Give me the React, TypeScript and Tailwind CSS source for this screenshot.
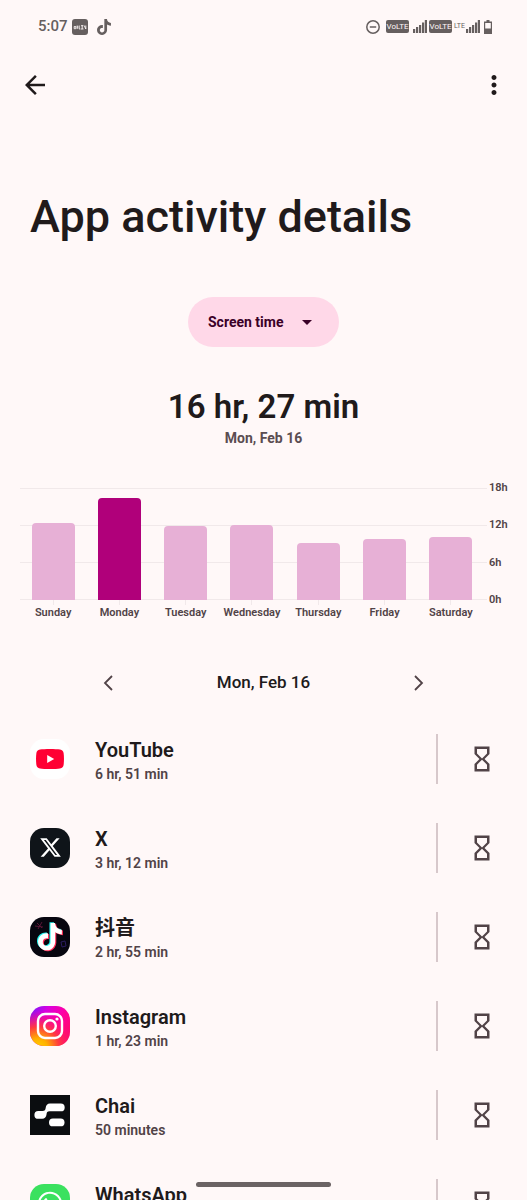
import { useState, type ReactNode } from "react";
import { MdArrowBack, MdArrowDropDown, MdHourglassEmpty, MdMoreVert } from "react-icons/md";
import { FaWhatsapp, FaXTwitter } from "react-icons/fa6";
import { SiTiktok } from "react-icons/si";

type Day = { name: string; hours: number };

const DAYS: Day[] = [
  { name: "Sunday", hours: 12.3 },
  { name: "Monday", hours: 16.45 },
  { name: "Tuesday", hours: 11.9 },
  { name: "Wednesday", hours: 12.1 },
  { name: "Thursday", hours: 9.2 },
  { name: "Friday", hours: 9.8 },
  { name: "Saturday", hours: 10.1 },
];

const MAX_HOURS = 18;

function SignalIcon() {
  return (
    <svg viewBox="0 0 14 13" className="h-[13px] w-[14px]" fill="currentColor" aria-hidden="true">
      <rect x="0" y="9" width="2.200" height="4" />
      <rect x="3" y="7" width="2.200" height="6" />
      <rect x="6" y="5" width="2.200" height="8" />
      <rect x="9" y="2.500" width="2.200" height="10.500" />
      <rect x="11.800" y="0" width="2.200" height="13" />
    </svg>
  );
}

function VolteBadge() {
  return (
    <span className="flex h-[13px] w-[23px] items-center justify-center rounded-[2px] bg-[#665f5f] text-[8px] leading-3 text-[#fff8f8]">
      VoLTE
    </span>
  );
}

function StatusBar() {
  return (
    <div className="flex h-[53px] items-center justify-between pr-[35px] pl-[38px] text-[#665f5f]">
      <div className="flex items-center">
        <span className="text-[15px] font-medium">5:07</span>
        <svg viewBox="0 0 16 16" className="ml-1 size-4" aria-hidden="true">
          <rect width="16" height="16" rx="3" fill="currentColor" />
          <path
            d="M2.200 7.500h1.600v2.200h-1.600zM5.200 6.500v3.500M4.800 8h1.500M7.200 6.500v3.500h1.200M9 6.700h2.300M10.200 6.500v3.500M9 10h2.500M12.200 6.500l1.600 3.500M13.800 6.500v3.500"
            fill="none"
            stroke="#fff8f8"
            strokeWidth="0.900"
          />
        </svg>
        <SiTiktok className="ml-2 size-4" />
      </div>
      <div className="flex items-center">
        <svg viewBox="0 0 14 14" className="mr-[6px] size-[14px]" fill="none" stroke="currentColor" strokeWidth="1.500" aria-hidden="true">
          <circle cx="7" cy="7" r="6.200" />
          <path d="M3.800 7h6.400" />
        </svg>
        <VolteBadge />
        <span className="ml-1">
          <SignalIcon />
        </span>
        <span className="ml-[2px]">
          <VolteBadge />
        </span>
        <span className="mr-px ml-[2px] text-[7px]">LTE</span>
        <SignalIcon />
        <svg viewBox="0 0 8 14" className="ml-1 h-[14px] w-2" aria-hidden="true">
          <path d="M2.500 0h3v1.500H8V14H0V1.500h2.500z" fill="currentColor" />
          <path d="M1.200 3h5.600v5.500H1.200z" fill="#fff8f8" />
        </svg>
      </div>
    </div>
  );
}

function Chevron({ d }: { d: string }) {
  return (
    <svg viewBox="0 0 28 28" className="size-7" fill="none" stroke="currentColor" strokeWidth="1.800" aria-hidden="true">
      <path d={d} />
    </svg>
  );
}

function Tile({ className, children }: { className: string; children: ReactNode }) {
  return (
    <span className={`flex size-10 shrink-0 items-center justify-center overflow-hidden ${className}`}>
      {children}
    </span>
  );
}

function YouTubeTile() {
  return (
    <Tile className="rounded-[14px] bg-white">
      <svg viewBox="0 0 28 20" className="h-5 w-7" aria-hidden="true">
        <path
          d="M4 .6C8-.1 20-.1 24 .6c2.300.4 3.300 1.500 3.600 3.500.5 3.400.5 8.400 0 11.800-.3 2-1.300 3.100-3.600 3.500-4 .7-16 .7-20 0C1.700 19 .7 17.900.4 15.900c-.5-3.400-.5-8.400 0-11.800C.7 2.100 1.700 1 4 .6z"
          fill="#ff0033"
        />
        <path d="M11.200 5.900v8.200L18.200 10z" fill="#fff" />
      </svg>
    </Tile>
  );
}

function XTile() {
  return (
    <Tile className="rounded-[14px] bg-[#0f1419] text-white">
      <FaXTwitter className="size-[23px]" />
    </Tile>
  );
}

const NOTE =
  "M12.525.02c1.310-.02 2.610-.01 3.910-.02.08 1.530.63 3.090 1.750 4.170 1.120 1.110 2.700 1.620 4.240 1.790v4.030c-1.440-.05-2.890-.35-4.200-.97-.57-.26-1.100-.59-1.620-.93-.01 2.920.01 5.840-.02 8.750-.08 1.400-.54 2.790-1.350 3.940-1.310 1.920-3.580 3.170-5.910 3.210-1.430.08-2.860-.31-4.080-1.030-2.020-1.190-3.440-3.370-3.650-5.710-.02-.5-.03-1-.01-1.490.18-1.900 1.120-3.720 2.580-4.960 1.660-1.440 3.980-2.130 6.150-1.720.02 1.480-.04 2.960-.04 4.440-.99-.32-2.150-.23-3.020.37-.63.41-1.110 1.040-1.360 1.750-.21.51-.15 1.070-.14 1.610.24 1.640 1.820 3.020 3.500 2.870 1.120-.01 2.190-.66 2.770-1.610.19-.33.4-.67.41-1.060.1-1.790.06-3.570.07-5.360.01-4.030-.01-8.050.02-12.070z";

function DouyinTile() {
  return (
    <Tile className="rounded-[14px] bg-[#07060f]">
      <svg viewBox="0 0 40 40" className="size-10" aria-hidden="true">
        <g fill="none" strokeWidth="1">
          <path d="M7 6l5 5M12 5l-4 7M5 9l8 1" stroke="#5b1636" />
          <path d="M31 25l4-1 1 5-4 1z" stroke="#2c1d60" />
        </g>
        <g>
          <path transform="translate(5.200 5.200) scale(1.140)" d={NOTE} fill="#25f4ee" />
          <path transform="translate(7.400 6.800) scale(1.140)" d={NOTE} fill="#fe2c55" />
          <path transform="translate(6.300 6) scale(1.140)" d={NOTE} fill="#fff" />
        </g>
      </svg>
    </Tile>
  );
}

function InstagramTile() {
  return (
    <Tile className="rounded-[14px]">
      <svg viewBox="0 0 40 40" className="size-10" aria-hidden="true">
        <defs>
          <linearGradient id="ig-base" x1="0" y1="0" x2="1" y2="0.600">
            <stop offset="0" stopColor="#6a1cff" />
            <stop offset="0.350" stopColor="#d900e0" />
            <stop offset="0.700" stopColor="#ff00a0" />
            <stop offset="1" stopColor="#ff0a70" />
          </linearGradient>
          <radialGradient id="ig-warm" cx="0.200" cy="1.050" r="0.950">
            <stop offset="0" stopColor="#ffd000" />
            <stop offset="0.250" stopColor="#ffb000" />
            <stop offset="0.550" stopColor="#ff3d3d" />
            <stop offset="1" stopColor="#ff0080" stopOpacity="0" />
          </radialGradient>
        </defs>
        <rect width="40" height="40" fill="url(#ig-base)" />
        <rect width="40" height="40" fill="url(#ig-warm)" />
        <g fill="none" stroke="#fff" strokeWidth="2.400">
          <rect x="8" y="8" width="24" height="24" rx="7" />
          <circle cx="20" cy="20" r="5.800" />
        </g>
        <circle cx="27" cy="13" r="1.600" fill="#fff" />
      </svg>
    </Tile>
  );
}

function ChaiTile() {
  return (
    <Tile className="bg-[#0b0d10]">
      <svg viewBox="0 0 40 40" className="size-10" fill="#fff" aria-hidden="true">
        <path d="M20 8.500h10.800a3.900 3.900 0 0 1 0 7.800H19.500c-2.300 0-2.700 1-3 3.200-.3 2.600-1.700 4.300-4.300 4.300H8.300a3.900 3.900 0 0 1 0-7.800h4.200c2.300 0 2.900-1 3.200-3.200.3-2.600 1.700-4.300 4.300-4.300z" />
        <rect x="19" y="23.500" width="15.500" height="7.800" rx="3.900" />
      </svg>
    </Tile>
  );
}

function WhatsAppTile() {
  return (
    <Tile className="rounded-[14px] bg-[#3be15f] text-white">
      <FaWhatsapp className="size-[28px]" />
    </Tile>
  );
}

const APPS: { name: string; time: string; icon: ReactNode }[] = [
  { name: "YouTube", time: "6 hr, 51 min", icon: <YouTubeTile /> },
  { name: "X", time: "3 hr, 12 min", icon: <XTile /> },
  { name: "抖音", time: "2 hr, 55 min", icon: <DouyinTile /> },
  { name: "Instagram", time: "1 hr, 23 min", icon: <InstagramTile /> },
  { name: "Chai", time: "50 minutes", icon: <ChaiTile /> },
  { name: "WhatsApp", time: "32 minutes", icon: <WhatsAppTile /> },
];

function WeekChart({ selected, onSelect }: { selected: string; onSelect: (day: string) => void }) {
  return (
    <section aria-label="Screen time by day" className="mt-10 flex pr-[18px] pl-5">
      <div className="min-w-0 flex-1">
        <div className="grid h-28">
          <div className="col-start-1 row-start-1 flex flex-col justify-between">
            {[18, 12, 6, 0].map((h) => (
              <div key={h} className="h-px bg-[#f1e9ea]" />
            ))}
          </div>
          <div className="col-start-1 row-start-1 grid grid-cols-7 pr-[3px]">
            {DAYS.map((day) => (
              <button
                key={day.name}
                type="button"
                aria-label={`${day.name}, ${day.hours} hours`}
                onClick={() => onSelect(day.name)}
                className="flex items-end justify-center"
              >
                <span
                  className={`w-[43px] rounded-t ${day.name === selected ? "bg-[#b0007a]" : "bg-[#e7b0d6]"}`}
                  style={{ height: `${(day.hours / MAX_HOURS) * 100}%` }}
                />
              </button>
            ))}
          </div>
        </div>
        <div className="grid grid-cols-7 pr-[3px]">
          {DAYS.map((day) => (
            <div key={day.name} className="flex flex-col items-center">
              <span className="h-[5px] w-px bg-[#f1e9ea]" />
              <span className="text-[11px] leading-4 font-semibold text-[#514347]">{day.name}</span>
            </div>
          ))}
        </div>
      </div>
      <div className="-my-2 ml-[2px] flex h-32 w-5 flex-col justify-between text-[11px] leading-4 font-semibold text-[#514347]">
        <span>18h</span>
        <span>12h</span>
        <span>6h</span>
        <span>0h</span>
      </div>
    </section>
  );
}

export default function App() {
  const [selected, setSelected] = useState("Monday");

  return (
    <div className="h-screen overflow-hidden bg-[#fff8f8] font-['Roboto','Noto_Sans_CJK_SC',sans-serif] text-[#201a1b]">
      <StatusBar />
      <header className="flex h-16 items-center justify-between pr-[18px] pl-5">
        <button type="button" aria-label="Back">
          <MdArrowBack className="size-[30px]" />
        </button>
        <button type="button" aria-label="More options">
          <MdMoreVert className="size-[30px]" />
        </button>
      </header>

      <main>
        <h1 className="mt-[70px] px-[30px] text-[45px] leading-[60px] font-medium">App activity details</h1>

        <div className="mt-[50px] flex justify-center">
          <div className="grid items-center">
            <select
              aria-label="Activity type"
              className="col-start-1 row-start-1 h-[50px] w-[151px] appearance-none rounded-full bg-[#ffd8e8] pl-5 text-[14px] font-bold text-[#3b0027]"
            >
              <option>Screen time</option>
              <option>Notifications received</option>
              <option>Times opened</option>
            </select>
            <MdArrowDropDown className="pointer-events-none col-start-1 row-start-1 mr-5 size-6 justify-self-end text-[#3b0027]" />
          </div>
        </div>

        <div className="mt-10 text-center">
          <p className="text-[33px] leading-10 font-semibold">16 hr, 27 min</p>
          <p className="mt-px text-[14px] leading-5 font-bold text-[#5b4d51]">Mon, Feb 16</p>
        </div>

        <WeekChart selected={selected} onSelect={setSelected} />

        <div className="mt-[47px] flex h-[30px] items-center justify-between px-[94px]">
          <button type="button" aria-label="Previous day" className="text-[#514347]">
            <Chevron d="M18 7l-7 7 7 7" />
          </button>
          <h2 className="text-[17px] font-medium">Mon, Feb 16</h2>
          <button type="button" aria-label="Next day" className="text-[#514347]">
            <Chevron d="M10 7l7 7-7 7" />
          </button>
        </div>

        <ul className="mt-4">
          {APPS.map((app) => (
            <li key={app.name} className="flex h-[89px] items-center pr-[30px] pl-[30px]">
              {app.icon}
              <div className="ml-[25px] min-w-0 flex-1 pt-[2px]">
                <p className="text-[20px] leading-7 font-semibold">{app.name}</p>
                <p className="text-[14px] leading-5 font-semibold text-[#514347]">{app.time}</p>
              </div>
              <span className="h-[50px] w-[2px] bg-[#d7c8cb]" />
              <button type="button" aria-label={`Set timer for ${app.name}`} className="ml-[29px] text-[#514347]">
                <MdHourglassEmpty className="size-[30px]" />
              </button>
            </li>
          ))}
        </ul>
      </main>

      <div className="fixed inset-x-0 bottom-[13px] flex justify-center">
        <span className="h-[5px] w-[135px] rounded-full bg-[#6b6364]" />
      </div>
    </div>
  );
}
